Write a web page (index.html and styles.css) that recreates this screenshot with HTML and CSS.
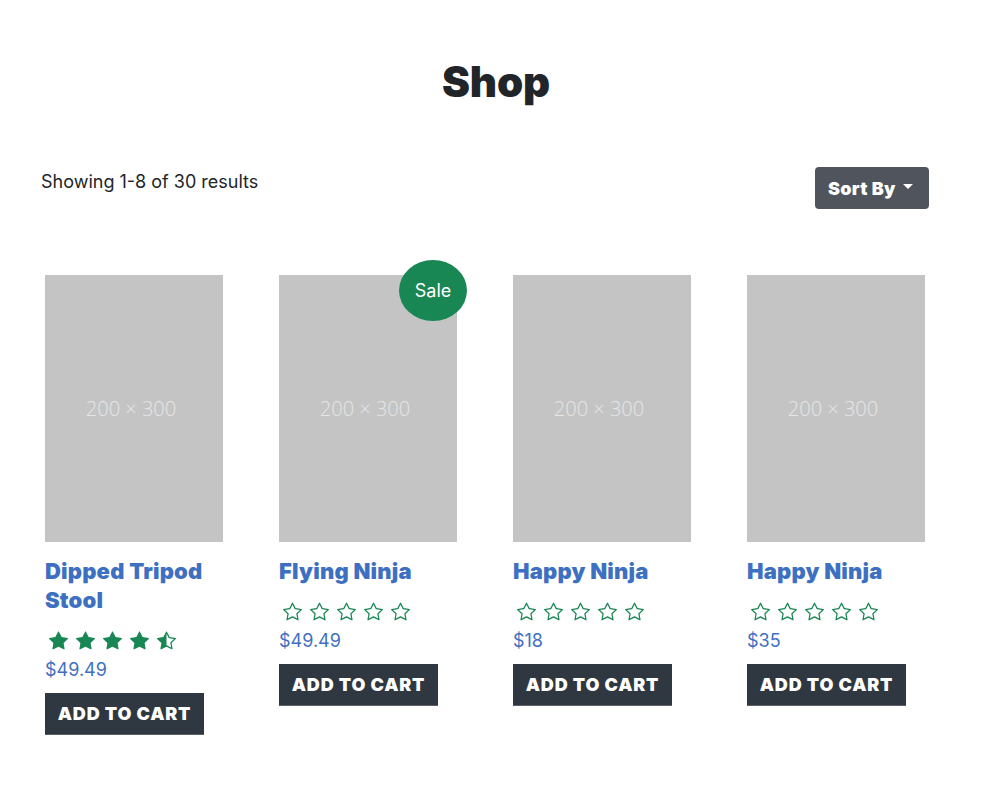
FILE: index.html
```html
<!DOCTYPE html>
<html lang="en">
<head>
<meta charset="utf-8">
<title>Shop</title>
<link rel="stylesheet" href="styles.css">
</head>
<body>
<svg class="defs" width="0" height="0" aria-hidden="true">
  <symbol id="star" viewBox="0 0 16 16"><path d="M2.866 14.85c-.078.444.36.791.746.593l4.39-2.256 4.389 2.256c.386.198.824-.149.746-.592l-.83-4.730 3.522-3.356c.33-.314.16-.888-.282-.95l-4.898-.696L8.465.792a.513.513 0 0 0-.927 0L5.354 5.12l-4.898.696c-.441.062-.612.636-.283.95l3.523 3.356-.83 4.73zm4.905-2.767-3.686 1.894.694-3.957a.56.56 0 0 0-.163-.505L1.71 6.745l4.052-.576a.53.53 0 0 0 .393-.288L8 2.223l1.847 3.658a.53.53 0 0 0 .393.288l4.052.575-2.906 2.77a.56.56 0 0 0-.163.506l.694 3.957-3.686-1.894a.5.5 0 0 0-.461 0z"/></symbol>
  <symbol id="star-fill" viewBox="0 0 16 16"><path d="M3.612 15.443c-.386.198-.824-.149-.746-.592l.83-4.73L.173 6.765c-.329-.314-.158-.888.283-.95l4.898-.696L7.538.792c.197-.39.73-.39.927 0l2.184 4.327 4.898.696c.441.062.612.636.282.95l-3.522 3.356.83 4.73c.078.443-.36.79-.746.592L8 13.187l-4.389 2.256z"/></symbol>
  <symbol id="star-half" viewBox="0 0 16 16"><path d="M5.354 5.119 7.538.792A.52.52 0 0 1 8 .5c.183 0 .366.097.465.292l2.184 4.327 4.898.696A.54.54 0 0 1 16 6.32a.55.55 0 0 1-.17.445l-3.523 3.356.83 4.73c.078.443-.36.79-.746.592L8 13.187l-4.389 2.256a.5.5 0 0 1-.146.05c-.342.06-.668-.254-.6-.642l.83-4.73L.173 6.765a.55.55 0 0 1-.172-.403.6.6 0 0 1 .085-.302.51.51 0 0 1 .37-.245zM8 12.027a.5.5 0 0 1 .232.056l3.686 1.894-.694-3.957a.56.56 0 0 1 .162-.505l2.907-2.77-4.052-.576a.53.53 0 0 1-.393-.288L8.001 2.223 8 2.226z"/></symbol>
</svg>

<main class="shop">
  <h1 class="shop-title">Shop</h1>

  <div class="toolbar">
    <p class="result-count">Showing 1-8 of 30 results</p>
    <button class="sort-btn" type="button">Sort By <span class="caret"></span></button>
  </div>

  <div class="products">
    <div class="product">
      <div class="thumb"><span>200 × 300</span></div>
      <h2 class="product-name">Dipped Tripod Stool</h2>
      <div class="stars">
        <svg class="star"><use href="#star-fill"/></svg>
        <svg class="star"><use href="#star-fill"/></svg>
        <svg class="star"><use href="#star-fill"/></svg>
        <svg class="star"><use href="#star-fill"/></svg>
        <svg class="star"><use href="#star-half"/></svg>
      </div>
      <div class="price">$49.49</div>
      <button class="cart-btn" type="button">Add to cart</button>
    </div>

    <div class="product">
      <div class="thumb"><span>200 × 300</span><span class="sale">Sale</span></div>
      <h2 class="product-name">Flying Ninja</h2>
      <div class="stars">
        <svg class="star"><use href="#star"/></svg>
        <svg class="star"><use href="#star"/></svg>
        <svg class="star"><use href="#star"/></svg>
        <svg class="star"><use href="#star"/></svg>
        <svg class="star"><use href="#star"/></svg>
      </div>
      <div class="price">$49.49</div>
      <button class="cart-btn" type="button">Add to cart</button>
    </div>

    <div class="product">
      <div class="thumb"><span>200 × 300</span></div>
      <h2 class="product-name">Happy Ninja</h2>
      <div class="stars">
        <svg class="star"><use href="#star"/></svg>
        <svg class="star"><use href="#star"/></svg>
        <svg class="star"><use href="#star"/></svg>
        <svg class="star"><use href="#star"/></svg>
        <svg class="star"><use href="#star"/></svg>
      </div>
      <div class="price">$18</div>
      <button class="cart-btn" type="button">Add to cart</button>
    </div>

    <div class="product">
      <div class="thumb"><span>200 × 300</span></div>
      <h2 class="product-name">Happy Ninja</h2>
      <div class="stars">
        <svg class="star"><use href="#star"/></svg>
        <svg class="star"><use href="#star"/></svg>
        <svg class="star"><use href="#star"/></svg>
        <svg class="star"><use href="#star"/></svg>
        <svg class="star"><use href="#star"/></svg>
      </div>
      <div class="price">$35</div>
      <button class="cart-btn" type="button">Add to cart</button>
    </div>
  </div>
</main>
</body>
</html>
```

FILE: styles.css
```css
* { box-sizing: border-box; }

html, body {
  margin: 0;
  padding: 0;
  background: #fff;
}

body {
  font-family: Inter, "Liberation Sans", sans-serif;
  color: #212529;
}

.defs {
  position: absolute;
  width: 0;
  height: 0;
  overflow: hidden;
}

.shop {
  padding: 56px 65px 40px 41px;
}

.shop-title {
  margin: 0;
  text-align: center;
  font-size: 42px;
  line-height: 51px;
  font-weight: 900;
  letter-spacing: -0.2px;
  color: #212529;
  padding-left: 22px;
}

.toolbar {
  display: flex;
  justify-content: space-between;
  align-items: flex-start;
  margin-top: 60px;
}

.result-count {
  margin: 1px 0 0;
  font-size: 18px;
  line-height: 27px;
}

.sort-btn {
  display: inline-flex;
  align-items: center;
  height: 42px;
  width: 114px;
  padding: 0 0 0 13px;
  border: 0;
  border-radius: 4px;
  background: #50545c;
  color: #fff;
  font-family: Inter, "Liberation Sans", sans-serif;
  font-size: 18px;
  font-weight: 900;
  letter-spacing: 0.3px;
}

.caret {
  display: inline-block;
  margin-left: 7px;
  border-top: 5.4px solid #fff;
  border-left: 5.4px solid transparent;
  border-right: 5.4px solid transparent;
  margin-top: -3px;
}

.products {
  display: grid;
  grid-template-columns: repeat(4, 178px);
  column-gap: 56px;
  margin-top: 66px;
  margin-left: 4px;
}

.product {
  display: flex;
  flex-direction: column;
  align-items: flex-start;
}

.thumb {
  position: relative;
  width: 178px;
  height: 267px;
  padding-right: 6px;
  background: #c4c4c4;
  display: flex;
  align-items: center;
  justify-content: center;
  font-family: "Open Sans", sans-serif;
  font-weight: 300;
  font-size: 20px;
  color: #e6e6e6;
}

.sale {
  position: absolute;
  top: -15px;
  right: -10px;
  width: 68px;
  height: 61px;
  border-radius: 50%;
  background: #198754;
  color: #fff;
  font-family: Inter, "Liberation Sans", sans-serif;
  font-weight: 400;
  font-size: 18px;
  display: flex;
  align-items: center;
  justify-content: center;
}

.product-name {
  margin: 15px 0 0;
  font-size: 22px;
  line-height: 29px;
  font-weight: 900;
  letter-spacing: 0.2px;
  color: #3e70c2;
}

.stars {
  display: flex;
  gap: 8px;
  margin-top: 16px;
  margin-left: 4px;
  height: 19px;
}

.star {
  width: 19px;
  height: 19px;
  fill: #198754;
}

.price {
  margin-top: 8px;
  font-size: 18px;
  line-height: 24px;
  color: #3e70c2;
}

.cart-btn {
  margin-top: 11px;
  height: 42px;
  width: 159px;
  padding: 0;
  border: 0;
  border-bottom: 1px solid #5a6068;
  background: #2f3741;
  color: #fff;
  font-family: Inter, "Liberation Sans", sans-serif;
  font-size: 18px;
  font-weight: 900;
  letter-spacing: 0.8px;
  text-transform: uppercase;
}
```
